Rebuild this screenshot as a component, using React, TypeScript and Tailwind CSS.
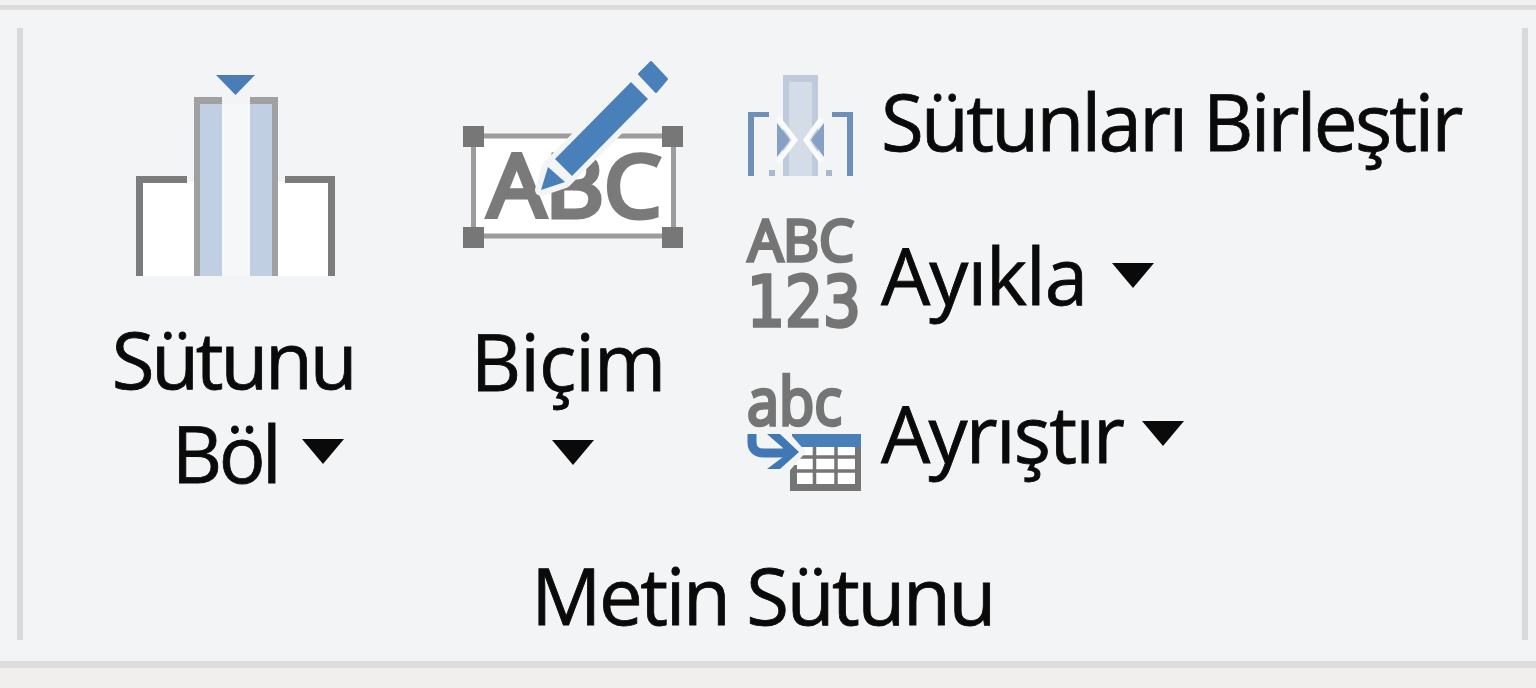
import React from "react";

const labelFont = { fontFamily: '"Open Sans", "Noto Sans", sans-serif' };

const Caret = ({ className = "" }: { className?: string }) => (
  <svg width="42" height="25" viewBox="0 0 42 25" className={className}>
    <path d="M0 0H42L21 25Z" fill="#0a0a0a" />
  </svg>
);

const SplitColumnIcon = () => (
  <svg width="210" height="206" viewBox="130 72 210 206" className="block">
    <rect x="143" y="182" width="51" height="94" fill="#ffffff" />
    <rect x="278" y="182" width="50" height="94" fill="#ffffff" />
    <rect x="222" y="104" width="28" height="172" fill="#f6f7f9" />
    <path d="M136 276V176H187V183H143V276Z" fill="#7c7c7c" />
    <path d="M335 276V176H285V183H328V276Z" fill="#7c7c7c" />
    <rect x="200" y="104" width="22" height="172" fill="#c1cfe2" />
    <rect x="250" y="104" width="22" height="172" fill="#c1cfe2" />
    <path d="M194 276V97H222V104H200V276Z" fill="#a0a0a2" />
    <path d="M278 276V97H250V104H272V276Z" fill="#a0a0a2" />
    <path d="M216 75H255L235.500 95Z" fill="#4a7db5" />
  </svg>
);

const FormatIcon = () => (
  <svg width="226" height="192" viewBox="460 60 226 192" className="block overflow-visible">
    <rect x="473" y="136" width="200" height="100" fill="#ffffff" />
    <rect x="473.500" y="136" width="200" height="100" fill="none" stroke="#9c9c9c" strokeWidth="5" />
    <text x="488" y="217" fontFamily='"Open Sans", sans-serif' fontSize="86" fill="#7a7a7a" stroke="#7a7a7a" strokeWidth="5" textLength="173" lengthAdjust="spacingAndGlyphs">
      ABC
    </text>
    <rect x="463" y="126" width="21" height="21" fill="#777777" />
    <rect x="662" y="126" width="21" height="21" fill="#777777" />
    <rect x="463" y="227" width="21" height="21" fill="#777777" />
    <rect x="662" y="227" width="21" height="21" fill="#777777" />
    <path d="M541 190L548 167L631 82L648 99L565 182Z" fill="#f3f4f6" stroke="#f3f4f6" strokeWidth="12" strokeLinejoin="round" />
    <path d="M651 62L667 79L656 92L639 74Z" fill="#4a80ba" strokeLinejoin="round" stroke="#4a80ba" strokeWidth="2" />
    <path d="M555 159L631 82L648 99L572 176Z" fill="#4a80ba" />
    <path d="M548 167L565 182L541 190Z" fill="#4a80ba" />
  </svg>
);

const MergeIcon = () => (
  <svg width="118" height="110" viewBox="746 70 118 110" className="block">
    <rect x="783" y="75" width="35" height="101" fill="#bfcbdd" />
    <rect x="789" y="82" width="23" height="94" fill="#d4dce8" />
    <path d="M778 118L795 140L778 162" fill="none" stroke="#fafbfc" strokeWidth="5" />
    <path d="M822 118L806 140L822 162" fill="none" stroke="#fafbfc" strokeWidth="5" />
    <path d="M777 123L790 140L777 157Z" fill="#86a0c5" />
    <path d="M824 123L811 140L824 157Z" fill="#86a0c5" />
    <path d="M748 176V112H769V117H754V176Z" fill="#6f8fb8" />
    <path d="M853 176V112H832V117H847V176Z" fill="#6f8fb8" />
    <rect x="769" y="170" width="6" height="6" fill="#a9b8cf" />
    <rect x="826" y="170" width="6" height="6" fill="#a9b8cf" />
  </svg>
);

const ExtractIcon = () => (
  <svg width="118" height="115" viewBox="746 215 118 115" className="block overflow-visible">
    <text x="748" y="261" fontFamily='"Open Sans", sans-serif' fontSize="57" fill="#757575" stroke="#757575" strokeWidth="3.500" textLength="106" lengthAdjust="spacingAndGlyphs">
      ABC
    </text>
    <text x="747" y="326" fontFamily='"DejaVu Sans", sans-serif' fontSize="69" fill="#757575" stroke="#757575" strokeWidth="3.500" textLength="114" lengthAdjust="spacingAndGlyphs">
      123
    </text>
  </svg>
);

const ParseIcon = () => (
  <svg width="118" height="120" viewBox="746 373 118 120" className="block overflow-visible">
    <text x="747" y="425" fontFamily='"Open Sans", sans-serif' fontSize="65" fill="#757575" stroke="#757575" strokeWidth="3.500" textLength="95" lengthAdjust="spacingAndGlyphs">
      abc
    </text>
    <rect x="790" y="447" width="71" height="44" fill="#ffffff" />
    <path d="M790 491V465H797V484H855V447H861V491Z" fill="#757575" />
    <path d="M797 457H855M797 471H855M814.500 447V484M836 447V484" stroke="#757575" strokeWidth="3.500" fill="none" />
    <rect x="792" y="434" width="69" height="13" fill="#4a80ba" />
    <path d="M785 428L806 452L785 476H760V428Z" fill="#f3f4f6" />
    <path d="M752 434V442Q752 453 764 453H786" fill="none" stroke="#3f78b5" strokeWidth="9" />
    <path d="M767 434H780L799 452L780 469H767L783 457V448Z" fill="#3f78b5" />
  </svg>
);

export default function App() {
  return (
    <div className="flex h-[688px] w-full flex-col overflow-hidden bg-[#f3f4f6] text-[#0a0a0a] [-webkit-text-stroke:0.8px_#0a0a0a]" style={labelFont}>
      <div className="h-[5px] bg-[#f1f1f1]" />
      <div className="h-[5px] bg-[#dcdcdc]" />
      <div className="flex h-[651px] pl-[17px] pr-[8px]">
        <div className="mt-[18px] h-[612px] w-[6px] bg-[#d9dadb]" />
        <div className="flex flex-1 flex-col">
          <div className="flex h-[520px] pt-[62px]">
            <div className="ml-[87px] flex w-[250px] flex-col items-center">
              <SplitColumnIcon />
              <span className="mt-[34px] mr-[4px] text-[78px] leading-[94px] tracking-[-3.2px]">Sütunu</span>
              <div className="flex items-center gap-[24px] pl-[46px]">
                <span className="text-[78px] leading-[94px] tracking-[-3.5px]">Böl</span>
                <Caret className="-mt-[4px]" />
              </div>
            </div>
            <div className="ml-[88px] flex w-[250px] flex-col items-center">
              <div className="-mt-[12px]">
                <FormatIcon />
              </div>
              <span className="mt-[62px] mr-[10px] text-[78px] leading-[94px] tracking-[-1px]">Biçim</span>
              <Caret className="mt-[32px]" />
            </div>
            <div className="ml-[48px] flex flex-col">
              <div className="-mt-[2px] flex h-[110px] items-center gap-[17px]">
                <MergeIcon />
                <span className="-mt-[8px] text-[78px] leading-[94px] tracking-[-2.7px]">Sütunları Birleştir</span>
              </div>
              <div className="mt-[35px] flex h-[115px] items-center gap-[17px]">
                <ExtractIcon />
                <span className="mt-[4px] text-[78px] leading-[94px] tracking-[-1px]">Ayıkla</span>
                <Caret className="ml-[8px] mt-[6px]" />
              </div>
              <div className="mt-[43px] flex h-[120px] items-center gap-[17px]">
                <ParseIcon />
                <span className="text-[78px] leading-[94px] tracking-[-1.8px]">Ayrıştır</span>
                <Caret className="ml-[2px]" />
              </div>
            </div>
          </div>
          <div className="mt-[18px] flex justify-center pr-[20px]">
            <span className="text-[78px] leading-[94px] tracking-[-2.4px]">Metin Sütunu</span>
          </div>
        </div>
        <div className="mt-[18px] h-[612px] w-[6px] bg-[#d9dadb]" />
      </div>
      <div className="h-[7px] bg-[#dcdcdc]" />
      <div className="flex-1 bg-[#f0efee]" />
    </div>
  );
}
